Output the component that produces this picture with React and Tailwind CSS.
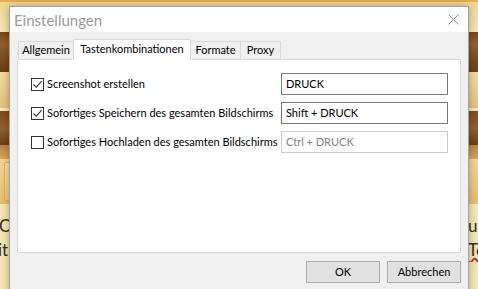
import React from 'react';

const rows = [
  { label: 'Screenshot erstellen', checked: true, value: 'DRUCK', enabled: true },
  { label: 'Sofortiges Speichern des gesamten Bildschirms', checked: true, value: 'Shift + DRUCK', enabled: true },
  { label: 'Sofortiges Hochladen des gesamten Bildschirms', checked: false, value: 'Ctrl + DRUCK', enabled: false },
];

const Check = ({ checked }) => (
  <span className="w-[13px] h-[13px] border border-[#333333] bg-white flex items-center justify-center shrink-0">
    {checked && (
      <svg width="11" height="11" viewBox="0 0 11 11">
        <path d="M1.5 5.5 L4.2 8.2 L9.6 2.2" fill="none" stroke="#333333" strokeWidth="1.1" />
      </svg>
    )}
  </span>
);

const Background = () => (
  <div className="flex flex-col w-full h-full">
    <div className="h-[2px] bg-[#e6ae4e]" />
    <div className="h-[30px] bg-[linear-gradient(#f0d896,#f5e6b6)]" />
    <div className="h-[40px] bg-[linear-gradient(#7a4716,#94602c_30%,#80501e_60%,#6e3f12)]" />
    <div className="h-[36px] bg-[linear-gradient(#f3dca0,#e6c17a)]" />
    <div className="h-[3px] bg-[#f6e8c0]" />
    <div className="h-[34px] bg-[linear-gradient(#7e4c1c,#93602d_50%,#6d3f13)]" />
    <div className="h-[14px] bg-[linear-gradient(#b98540,#d6a85e)]" />
    <div className="h-[45px] flex bg-[linear-gradient(#f3d892,#e8bd68)] pl-[4px] py-[3px]">
      <div className="w-[20px] rounded-[2px] border border-[#d9b466] bg-[linear-gradient(#f8e4b0,#efcb80)]" />
    </div>
    <div className="flex-1 bg-[#f5e7b4] flex flex-col pt-[10px] text-[17px] leading-[24px] text-[#3d2a10]">
      <div className="flex justify-between">
        <span className="-ml-[1px]">O</span>
        <span className="w-[10px] overflow-hidden">ue</span>
      </div>
      <div className="flex justify-between">
        <span className="-ml-[2px]">it</span>
        <span className="w-[10px] overflow-hidden underline decoration-wavy decoration-[#d02020]">To</span>
      </div>
    </div>
  </div>
);

export default function App() {
  return (
    <div className="relative w-[478px] h-[289px] overflow-hidden font-['Lato','Noto_Sans',sans-serif] text-[11px] text-black">
      <Background />

      <div className="absolute left-[9px] top-[6px] w-[460px] h-[300px] border border-[#a3a3a3] bg-[#f0f0f0] shadow-[0_0_8px_rgba(0,0,0,0.3)] flex flex-col">
        <div className="h-[25px] bg-white flex items-center justify-between pl-[4px] pr-[9px]">
          <span className="text-[15px] text-[#9a9a9a] leading-none pt-[2px]">Einstellungen</span>
          <svg width="11" height="11" viewBox="0 0 11 11">
            <path d="M0.5 0.5 L10.5 10.5 M10.5 0.5 L0.5 10.5" stroke="#8f8f8f" strokeWidth="1" fill="none" />
          </svg>
        </div>

        <div className="flex flex-col px-[7px] pt-[7px]">
          <div className="flex items-end h-[20px] pl-[1px]">
            <div className="w-[55px] h-[18px] border-l border-t border-[#d9d9d9] flex items-center justify-center">Allgemein</div>
            <div className="w-[118px] h-[21px] -mb-px relative z-10 bg-white border-l border-t border-r border-[#d9d9d9] flex items-center justify-center pb-[2px]">Tastenkombinationen</div>
            <div className="w-[50px] h-[18px] border-t border-r border-[#d9d9d9] flex items-center justify-center">Formate</div>
            <div className="w-[40px] h-[18px] border-t border-r border-[#d9d9d9] flex items-center justify-center">Proxy</div>
          </div>

          <div className="h-[194px] bg-white border border-[#d9d9d9] pl-[13px] pt-[13px]">
            <div className="flex flex-col gap-[7px]">
              {rows.map((r) => (
                <div key={r.label} className="grid grid-cols-[250px_167px] h-[22px] items-center">
                  <div className="flex items-center gap-[3px]">
                    <Check checked={r.checked} />
                    <span className="whitespace-nowrap">{r.label}</span>
                  </div>
                  <div className={`h-[22px] border bg-white flex items-center pl-[4px] ${r.enabled ? 'border-[#7a7a7a] text-black' : 'border-[#cccccc] text-[#838383]'}`}>
                    {r.value}
                  </div>
                </div>
              ))}
            </div>
          </div>

          <div className="flex justify-end gap-[7px] pt-[8px]">
            <button className="w-[74px] h-[22px] bg-[#e1e1e1] border border-[#adadad] flex items-center justify-center">OK</button>
            <button className="w-[74px] h-[22px] bg-[#e1e1e1] border border-[#adadad] flex items-center justify-center">Abbrechen</button>
          </div>
        </div>
      </div>
    </div>
  );
}
